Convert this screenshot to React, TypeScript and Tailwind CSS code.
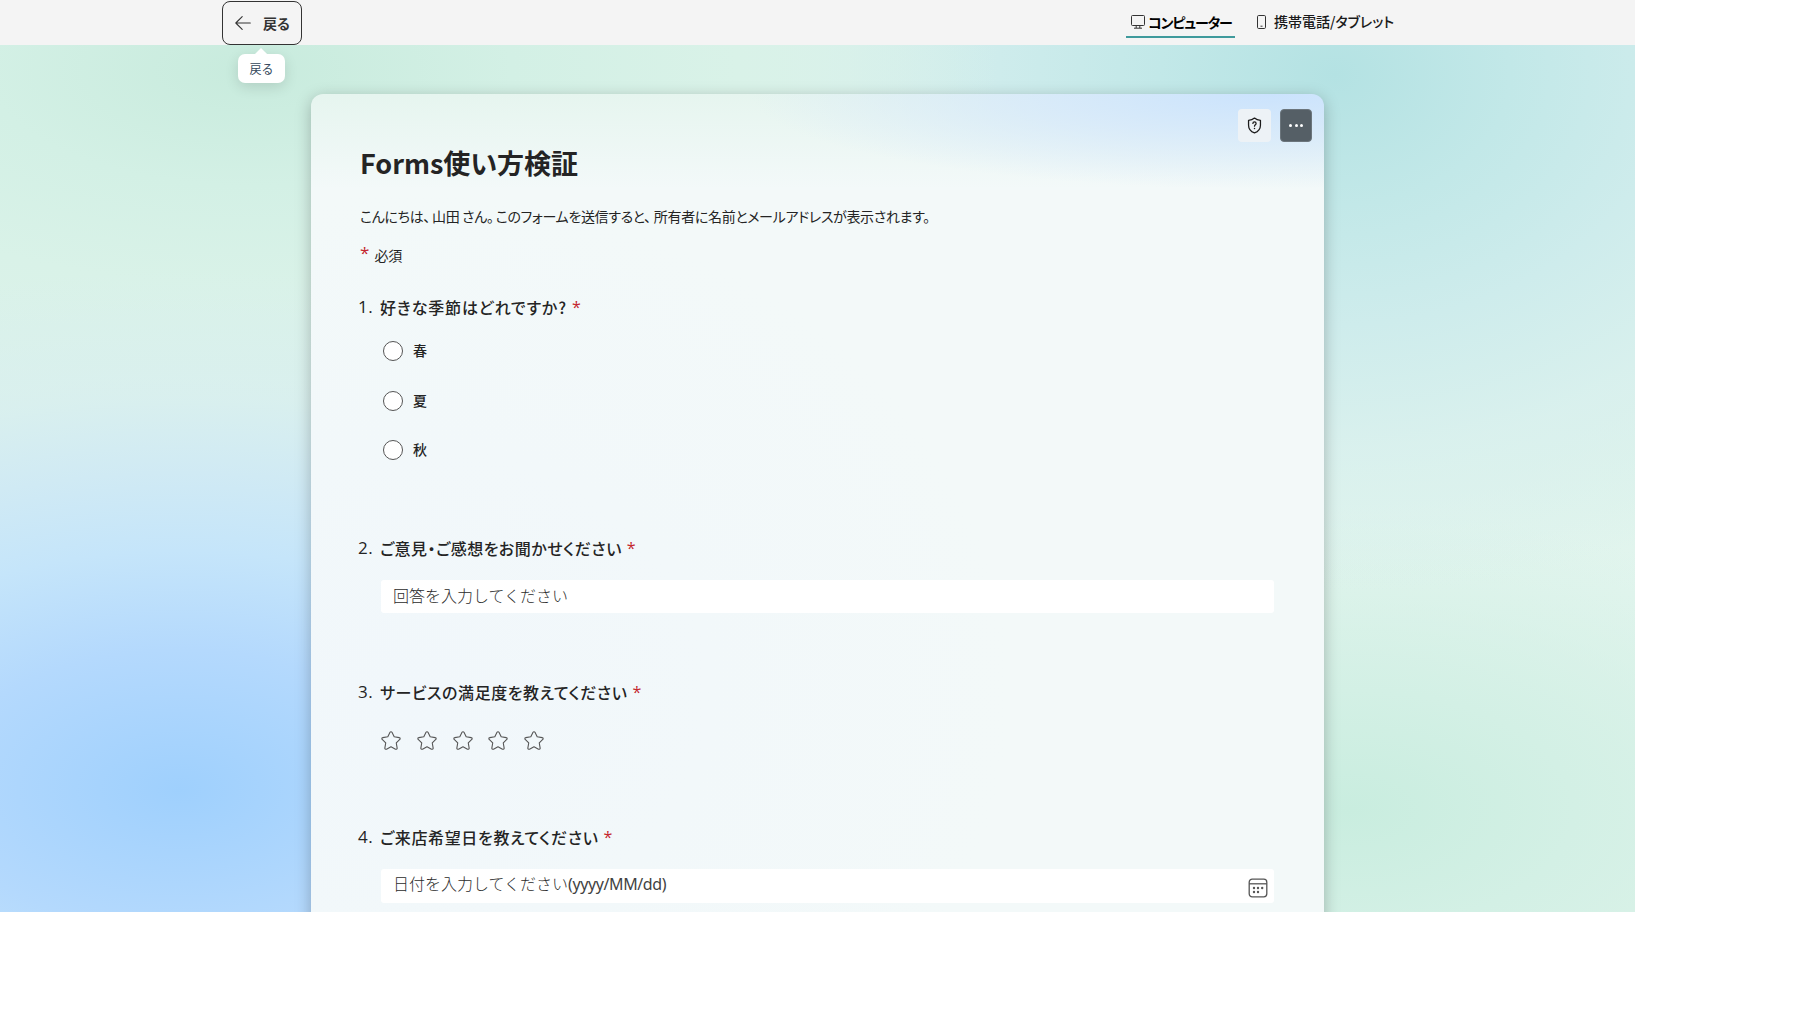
import type { ReactNode } from 'react';
import { clsx } from 'clsx';

const JP_FONT = "font-['Noto_Sans_CJK_JP',sans-serif]";

function ArrowLeftIcon() {
  return (
    <svg className="h-4 w-4 shrink-0" viewBox="0 0 16 16" fill="none" stroke="#333" strokeWidth="1.1" strokeLinecap="round" strokeLinejoin="round">
      <path d="M15.3 8H.8M7.2 1.6.8 8l6.4 6.4" />
    </svg>
  );
}

function DesktopIcon() {
  return (
    <svg className="h-[14px] w-[14px] shrink-0" viewBox="0 0 14 14" fill="none" stroke="#333" strokeWidth="1">
      <rect x=".5" y=".5" width="13" height="10" rx="1" />
      <path d="M5.2 10.5v2.5M8.8 10.5v2.5M3 13.2h8" />
    </svg>
  );
}

function PhoneIcon() {
  return (
    <svg className="h-[14px] w-[9px] shrink-0" viewBox="0 0 9 14" fill="none" stroke="#333" strokeWidth="1">
      <rect x=".5" y=".5" width="8" height="13" rx="1.2" />
      <path d="M3.5 11.2h2" />
    </svg>
  );
}

function ShieldQuestionIcon() {
  return (
    <svg className="-ml-px h-[17px] w-[17px]" viewBox="0 0 16 16" fill="none" stroke="#1b1b1b" strokeWidth="1.2" strokeLinecap="round" strokeLinejoin="round">
      <path d="M8 1c1.5 1.3 3.3 2 5.6 2.1v4.6c0 3.5-2 5.9-5.6 7.3-3.6-1.4-5.6-3.8-5.6-7.3V3.1C4.7 3 6.5 2.3 8 1Z" />
      <path d="M6.5 6.1c0-1 .7-1.6 1.5-1.6s1.5.6 1.5 1.5c0 1.2-1.5 1.3-1.5 2.6" />
      <circle cx="8" cy="10.8" r=".7" fill="#1b1b1b" stroke="none" />
    </svg>
  );
}

function StarIcon() {
  return (
    <svg className="h-[22px] w-[22px]" viewBox="0 0 20 20" fill="none" stroke="#555" strokeWidth="1" strokeLinejoin="round">
      <path d="M9.1 2.1c.4-.7 1.4-.7 1.8 0l2 4.1 4.6.7c.8.1 1.1 1.1.5 1.7l-3.2 3.2.8 4.6c.1.8-.7 1.4-1.5 1L10 15.3l-4.1 2.1c-.8.4-1.6-.2-1.5-1l.8-4.6L2 8.6c-.6-.6-.3-1.6.5-1.7l4.6-.7 2-4.1Z" />
    </svg>
  );
}

function CalendarIcon() {
  return (
    <svg className="mt-[3px] h-5 w-5" viewBox="0 0 20 20" fill="none" stroke="#555" strokeWidth="1.3">
      <rect x="1.2" y="1.2" width="17.6" height="17.6" rx="3" />
      <path d="M1.2 5.8h17.6" />
      <g fill="#555" stroke="none">
        <circle cx="6" cy="10" r="1.2" />
        <circle cx="10" cy="10" r="1.2" />
        <circle cx="14.2" cy="10" r="1.2" />
        <circle cx="6" cy="14" r="1.2" />
        <circle cx="10" cy="14" r="1.2" />
      </g>
    </svg>
  );
}

interface QuestionProps {
  no: number;
  title: string;
  titleClass: string;
  className: string;
  children: ReactNode;
}

function Question({ no, title, titleClass, className, children }: QuestionProps) {
  return (
    <section className={className}>
      <h2 className="flex h-6 items-center text-[16px] font-medium leading-6 text-[#242424]">
        <span className="w-[22px] shrink-0 whitespace-nowrap font-['Open_Sans'] text-[17px] font-normal tracking-[0.5px]">{no}.</span>
        <span className={clsx('whitespace-nowrap', titleClass)}>{title}</span>
        <span className="ml-[5px] font-['Open_Sans'] text-[16px] font-normal text-[#c4262e]">*</span>
      </h2>
      <div className="ml-[23px]">{children}</div>
    </section>
  );
}

const seasons = [
  { label: '春', gap: 'mb-[30px]' },
  { label: '夏', gap: 'mb-[29px]' },
  { label: '秋', gap: '' }
];

export default function App() {
  return (
    <div className="h-[1013px] w-[1816px] overflow-hidden bg-white">
      <div
        className={clsx(
          'flex h-[912px] w-[1635px] flex-col overflow-hidden [font-feature-settings:"palt"]',
          'bg-[radial-gradient(ellipse_900px_520px_at_180px_790px,#9fd0fd_0%,#b4d9fd_27%,#c5e5fa_46%,#d0eaf4_61%,#d8efefcc_76%,#dcf2ea00_100%),radial-gradient(ellipse_750px_330px_at_250px_70px,#c8ebdd_0%,#d3f0e5_35%,#d9f2e8_65%,#dcf2ea00_100%),radial-gradient(ellipse_700px_520px_at_1335px_75px,#b4e2e3_0%,#c2e8e8_25%,#ceecec_48%,#d8f0eecc_72%,#def3ee00_100%),radial-gradient(ellipse_560px_300px_at_1350px_810px,#c9eddf_0%,#d3f0e5_40%,#def3ee00_100%),linear-gradient(180deg,#dcf2ea_0%,#dcf2ea_40%,#e2f5ee_65%,#dff3ea_100%)]',
          JP_FONT
        )}
      >
        {/* Preview toolbar */}
        <header className="flex h-[45px] shrink-0 items-start bg-[#f4f4f4]">
          <div className="relative ml-[222px] mt-px">
            <button className="flex h-11 w-20 items-center rounded-lg border border-[#333] pl-3 text-[14px] font-bold text-[#333]">
              <ArrowLeftIcon />
              <span className="ml-3 whitespace-nowrap">戻る</span>
            </button>
            {/* Tooltip */}
            <div className="absolute left-4 top-[53px] z-10 flex h-[29px] w-[47px] items-center justify-center rounded-[7px] bg-white text-[12px] text-[#33475b] shadow-[0_4px_14px_rgba(0,0,0,0.12)] [font-feature-settings:normal]">
              <span className="absolute -top-[4px] left-[18px] h-[10px] w-[10px] rotate-45 bg-white" />
              <span className="relative">戻る</span>
            </div>
          </div>
          <nav className="ml-[824px] flex text-[14px] text-[#1a1a1a]">
            <div className="flex h-[38px] w-[109px] items-center border-b-2 border-[#3f9a9c] pl-[5px] pt-2 font-bold text-black">
              <DesktopIcon />
              <span className="ml-[3px] whitespace-nowrap tracking-[-1.15px]">コンピューター</span>
            </div>
            <div className="ml-[22px] flex h-[38px] items-center pt-[5px] font-medium">
              <PhoneIcon />
              <span className="ml-2 whitespace-nowrap">携帯電話/タブレット</span>
            </div>
          </nav>
        </header>

        <main className="ml-[311px] mt-[49px] flex h-[900px] w-[1013px] shrink-0 flex-col rounded-t-[12px] bg-[#f3f9f9] bg-[radial-gradient(ellipse_520px_95px_at_960px_0px,#cbe3fd_0%,#d5e8fbcc_45%,#f3f9f900_100%),linear-gradient(180deg,#e6f5ef_0%,#f3f9f900_95px),radial-gradient(ellipse_600px_500px_at_100px_600px,#f1f7fb_0%,#f3f9f900_100%)] px-[47px] shadow-[0_4px_16px_rgba(0,0,0,0.25)]">
          <div className="-mr-[35px] mt-[15px] flex justify-end gap-[9px]">
            <button className="flex h-[33px] w-[33px] items-center justify-center rounded-[4px] bg-[#edf2f6]">
              <ShieldQuestionIcon />
            </button>
            <button className="flex h-[33px] w-8 items-center justify-center gap-[2.7px] rounded-[4px] border border-[#6b757c] bg-[#555f66] pb-px">
              <span className="h-[3px] w-[3px] rounded-full bg-white" />
              <span className="h-[3px] w-[3px] rounded-full bg-white" />
              <span className="h-[3px] w-[3px] rounded-full bg-white" />
            </button>
          </div>

          <div className="pl-[2px]">
            <h1 className="mt-px flex h-10 items-center whitespace-nowrap text-[27px] font-bold text-[#242424]">Forms使い方検証</h1>
            <p className="mt-[21px] h-6 whitespace-nowrap text-[14px] leading-6 tracking-[-0.34px] text-[#242424]">
              <span className="mr-[2px]">こんにちは、</span>
              <span className="mr-[2px]">山田 さん。</span>
              <span className="mr-[3px]">このフォームを送信すると、</span>
              <span>所有者に名前とメールアドレスが表示されます。</span>
            </p>
            <p className="mt-[15px] flex h-6 items-center text-[14px] leading-6 text-[#242424]">
              <span className="mb-[5px] mr-[5px] font-['Open_Sans'] text-[17px] text-[#c4262e]">*</span>
              必須
            </p>
          </div>

          <Question no={1} title="好きな季節はどれですか?" titleClass="tracking-[0.85px]" className="mt-[28px] h-[241px]">
            <div className="pl-[2px] pt-[22px]">
              {seasons.map((s) => (
                <label key={s.label} className={clsx('flex h-5 items-center text-[14px] font-medium text-[#242424]', s.gap)}>
                  <span className="mr-[10px] h-5 w-5 rounded-full border border-[#555] bg-white" />
                  <span className="pb-0.5">{s.label}</span>
                </label>
              ))}
            </div>
          </Question>

          <Question no={2} title="ご意見・ご感想をお聞かせください" titleClass="tracking-[0.5px]" className="h-36">
            <div className="mt-[20px] flex h-[33px] w-[893px] items-center rounded-[3px] bg-white pb-[3px] pl-3 text-[16px] font-light text-[#2b2b2b] [font-feature-settings:normal]">
              回答を入力してください
            </div>
          </Question>

          <Question no={3} title="サービスの満足度を教えてください" titleClass="tracking-[0.55px]" className="h-[145px]">
            <div className="-ml-px mt-[26px] flex gap-[13.8px]">
              {[1, 2, 3, 4, 5].map((n) => (
                <StarIcon key={n} />
              ))}
            </div>
          </Question>

          <Question no={4} title="ご来店希望日を教えてください" titleClass="tracking-[0.65px]" className="h-36">
            <div className="mt-[20px] flex h-[34px] w-[893px] items-center justify-between rounded-[3px] bg-white pl-3 pr-1.5 text-[16px] font-light text-[#2b2b2b] [font-feature-settings:normal]">
              <span className="-mt-[5px] whitespace-nowrap">
                日付を入力してください
                <span className="font-['Noto_Sans'] text-[16px] font-normal tracking-[-0.4px] text-[#424242]">(yyyy/MM/dd)</span>
              </span>
              <CalendarIcon />
            </div>
          </Question>
        </main>
      </div>
    </div>
  );
}
